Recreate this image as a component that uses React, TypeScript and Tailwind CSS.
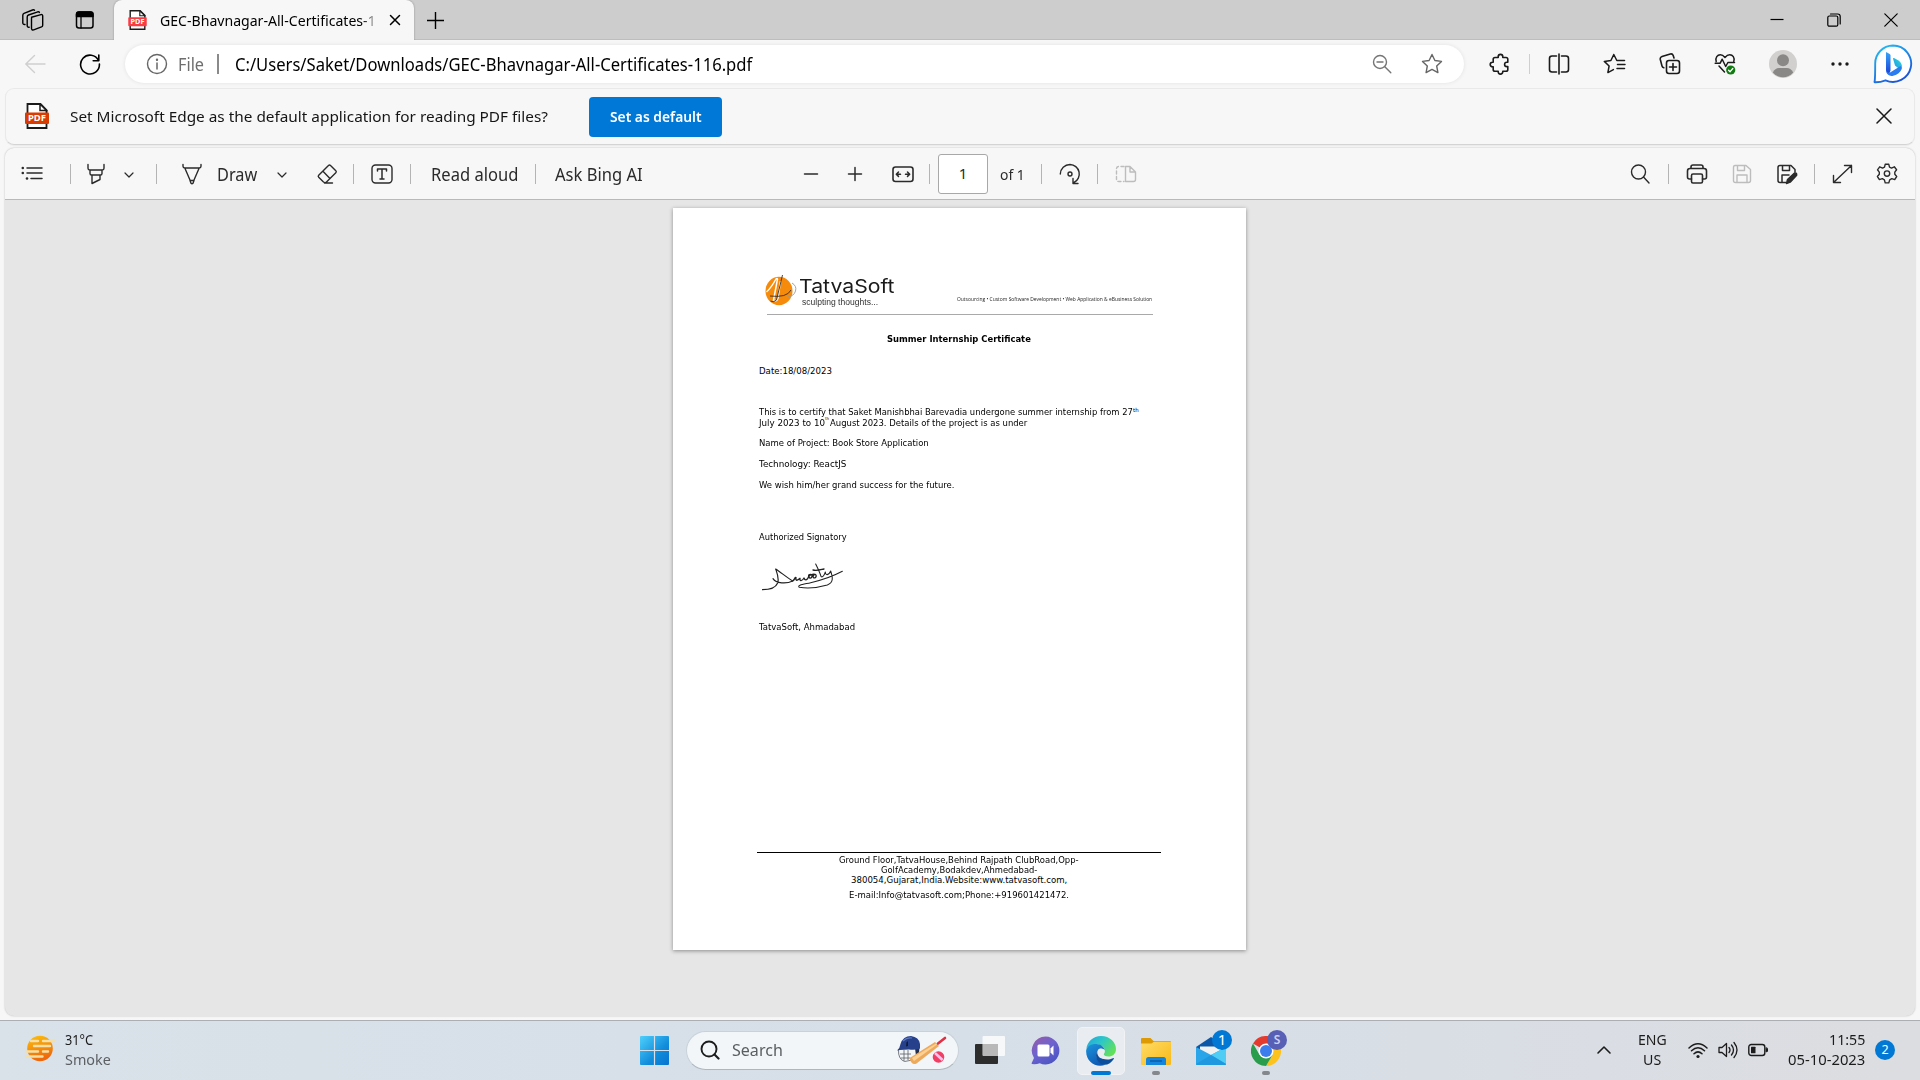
import React, { useLayoutEffect, useRef, useState } from "react";

/* Single-line text that is condensed or widened to fill the width of its box. */
function Fit({ className, children }: { className: string; children: React.ReactNode }) {
  const outer = useRef<HTMLSpanElement>(null);
  const inner = useRef<HTMLSpanElement>(null);
  const [scale, setScale] = useState(1);
  useLayoutEffect(() => {
    const o = outer.current;
    const i = inner.current;
    if (o && i && i.offsetWidth > 0) setScale(o.clientWidth / i.offsetWidth);
  }, []);
  return (
    <span ref={outer} className={`block shrink-0 whitespace-nowrap ${className}`}>
      <span ref={inner} className="inline-block origin-left" style={{ transform: `scaleX(${scale})` }}>
        {children}
      </span>
    </span>
  );
}

function Icon({
  className = "",
  box = "0 0 22 22",
  children,
}: {
  className?: string;
  box?: string;
  children: React.ReactNode;
}) {
  return (
    <svg
      className={`block shrink-0 ${className}`}
      viewBox={box}
      fill="none"
      stroke="currentColor"
      strokeWidth={1.4}
      strokeLinecap="round"
      strokeLinejoin="round"
    >
      {children}
    </svg>
  );
}

const Divider = ({ className }: { className: string }) => (
  <span className={`block h-5 w-px shrink-0 bg-[#b4b4b4] ${className}`} />
);

function PdfIcon({ className, color }: { className: string; color: string }) {
  return (
    <svg className={`block shrink-0 ${className}`} viewBox="0 0 24 26">
      <path d="M2.5 1h13l6 6v18h-19z" fill="#fff" stroke="#1b1b1b" strokeWidth="1.8" />
      <path d="M15 1v6.5h6.5z" fill="#fff" stroke="#1b1b1b" strokeWidth="1.5" />
      <rect x="0" y="9.5" width="24" height="11.5" rx="1" fill={color} />
      <text x="12" y="18.4" textAnchor="middle" fontSize="8.6" fontWeight="700" fill="#fff" fontFamily="Noto Sans, sans-serif" textLength="18" lengthAdjust="spacingAndGlyphs">
        PDF
      </text>
    </svg>
  );
}

function TabStrip() {
  return (
    <div className="flex h-10 shrink-0 items-center border-b border-[#bdbdbd] bg-[#cdcdcd] text-black">
      <Icon className="ml-[21px] h-[22px] w-[23px]" box="0 0 23 22">
        <path d="M10.5 8.2 20 5.6q1.6-.3 1.7 1.2v9.4q0 1.2-1.2 1.7l-7.800 3q-2 .5-2.200-1.400V9.600q0-1 .7-1.400z" />
        <path d="M8.200 18.200q-1.900.3-2-1.500V8q0-1.500 1.300-2l9.300-3.200q1.200-.3 1.600.6" />
        <path d="M4 15.500Q2 15.800 1.800 14V6.300q0-1.500 1.200-2L11.500 1q1.300-.5 2 .3" />
      </Icon>
      <Icon className="ml-[31px] h-5 w-5" box="0 0 20 20">
        <rect x="1.500" y="2" width="16.500" height="16" rx="2.500" strokeWidth="1.500" />
        <path d="M1.500 6.500V4.500Q1.500 2 4 2h11.500Q18 2 18 4.500v2z" fill="currentColor" />
        <path d="M6 7v11" strokeWidth="1.300" />
      </Icon>
      <div className="ml-[19px] flex h-10 w-[300px] shrink-0 items-center self-start rounded-t-lg bg-[#f7f7f7] shadow-[0_0_2px_rgba(0,0,0,0.35)] [clip-path:inset(-3px_-3px_0_-3px)]">
        <PdfIcon className="ml-[14px] h-5 w-[19px]" color="#fb3b41" />
        <div className="ml-[13px] w-[217px] shrink-0 [mask-image:linear-gradient(to_right,#000_93%,rgba(0,0,0,0.15)_100%)]">
          <Fit className="w-[216px] text-[15px] leading-5">GEC-Bhavnagar-All-Certificates-1</Fit>
        </div>
        <Icon className="ml-3 h-3 w-3" box="0 0 12 12">
          <path d="M1.500 1.500l9 9M10.500 1.500l-9 9" strokeWidth="1.500" />
        </Icon>
      </div>
      <Icon className="ml-3 h-[18px] w-[18px]" box="0 0 18 18">
        <path d="M9.500 1v17M1 9.500h17" strokeLinecap="butt" />
      </Icon>
      <div className="ml-auto flex items-center">
        <Icon className="h-[14px] w-[14px]" box="0 0 14 14">
          <path d="M.5 6.500h13" strokeWidth="1.200" strokeLinecap="butt" />
        </Icon>
        <Icon className="ml-[43px] h-[14px] w-[14px]" box="0 0 14 14">
          <rect x=".8" y="3" width="10" height="10.200" rx="1.500" strokeWidth="1.200" />
          <path d="M3.500 1h7.200q2.500 0 2.500 2.500V11" strokeWidth="1.200" />
        </Icon>
        <Icon className="ml-[43px] mr-[22px] h-[14px] w-[14px]" box="0 0 14 14">
          <path d="M.8.8l12.400 12.400M13.200.8L.8 13.200" strokeWidth="1.200" />
        </Icon>
      </div>
    </div>
  );
}

const star = "M11 1.500l2.900 6 6.600.9-4.800 4.600 1.200 6.600-5.900-3.200-5.900 3.200 1.200-6.600L1.500 8.400l6.600-.9z";

function AddressBar() {
  return (
    <div className="flex h-12 shrink-0 items-center pb-px text-[#1a1a1a]">
      <Icon className="ml-6 h-[22px] w-[22px] text-[#cfcfcf]">
        <path d="M10.500 2.500L1.800 11l8.700 8.500M2 11h19" />
      </Icon>
      <Icon className="ml-[33px] h-[22px] w-[22px] text-black">
        <path d="M19.500 7.500A9.400 9.400 0 1 0 20.400 11M19.800 2v5.700h-5.600" strokeWidth="1.600" />
      </Icon>
      <div className="ml-6 flex h-[38px] w-[1339px] shrink-0 items-center rounded-full bg-white shadow-[0_0_4px_rgba(0,0,0,0.09)]">
        <Icon className="ml-[21px] h-[22px] w-[22px] text-[#666]">
          <circle cx="11" cy="11" r="9.500" />
          <path d="M11 10v6" strokeWidth="1.500" />
          <circle cx="11" cy="6.800" r=".5" fill="currentColor" />
        </Icon>
        <Fit className="ml-[10px] w-[26px] text-[17.500px] leading-6 text-[#6e6e6e]">File</Fit>
        <span className="ml-[13px] block h-5 w-[1.500px] bg-[#8a8a8a]" />
        <Fit className="ml-4 w-[517px] text-[17.500px] leading-6 text-black">C:/Users/Saket/Downloads/GEC-Bhavnagar-All-Certificates-116.pdf</Fit>
        <Icon className="ml-auto h-5 w-5 text-[#757575]" box="0 0 20 20">
          <circle cx="8" cy="8" r="6.500" />
          <path d="M12.800 12.800l6 6M5 8h6" />
        </Icon>
        <Icon className="ml-[29px] mr-[21px] h-[22px] w-[22px] text-[#666]">
          <path d={star} />
        </Icon>
      </div>
      <Icon className="ml-[25px] h-[22px] w-[22px]">
        <path
          d="M6 4.500h3.200V3.700a2.300 2.300 0 0 1 4.600 0v.8H17q1.800 0 1.800 1.800v2.900h-1a2.200 2.200 0 0 0 0 4.400h1v2.900q0 1.800-1.800 1.800h-3.200v.5a2.300 2.300 0 0 1-4.600 0v-.5H6q-1.800 0-1.800-1.800v-2.700h-.7a2.300 2.300 0 0 1 0-4.600h.7V6.300Q4.200 4.500 6 4.500z"
          strokeWidth="1.600"
        />
      </Icon>
      <Divider className="ml-[18px] bg-[#cfcfcf]" />
      <Icon className="ml-[18px] h-[22px] w-[22px]">
        <path d="M8.500 3H4Q1.500 3 1.500 5.500v11Q1.500 19 4 19h4.500M13.500 3H18q2.500 0 2.500 2.500v11Q20.500 19 18 19h-4.500M11 1v20" strokeWidth="1.600" />
      </Icon>
      <Icon className="ml-[33px] h-[22px] w-[23px]" box="0 0 23 22">
        <path d="M14.200 7.500h-.4L10.800 1.500 7.900 7.500 1.300 8.400l4.800 4.600-1.200 6.600 5.500-3M14 7.500h7.500M14.500 11.500H22M14 15.500h7.500" strokeWidth="1.500" />
      </Icon>
      <Icon className="ml-[33px] h-[22px] w-[22px]">
        <rect x="7.500" y="7.500" width="13" height="13" rx="2.500" strokeWidth="1.600" />
        <path d="M14 10.500v7M10.500 14h7M4.800 14.800Q3.400 14.500 3 13L1.300 6.500Q.8 4.300 3 3.500L11.300 1q2.200-.5 2.900 1.500l.8 2.500" strokeWidth="1.600" />
      </Icon>
      <Icon className="ml-[33px] h-6 w-6" box="0 0 24 24">
        <path d="M2.200 9.500C1 5.500 3.500 2.800 6.300 2.800c2 0 3.300 1 4.700 2.600 1.400-1.600 2.700-2.600 4.700-2.600 3 0 5.300 2.700 4.100 6.700M1.200 11.200h5l2-4 3.500 7.300 2.200-4h6.600M5 14l5.500 6" strokeWidth="1.500" />
        <circle cx="16.700" cy="18" r="4.600" fill="#107c10" stroke="none" />
        <path d="M14.600 18.200l1.500 1.500 2.700-3.200" stroke="#fff" strokeWidth="1.300" />
      </Icon>
      <svg className="ml-[31px] block h-7 w-7 shrink-0" viewBox="0 0 28 28">
        <circle cx="14" cy="14" r="14" fill="#d2d0ce" />
        <circle cx="14" cy="10.300" r="6" fill="#8a8886" />
        <path d="M3.800 22.500Q6 18 10 18h8q4 0 6.200 4.500A13.500 13.500 0 0 1 3.800 22.500z" fill="#8a8886" />
      </svg>
      <Icon className="ml-[33px] h-5 w-5" box="0 0 20 20">
        <g fill="currentColor" stroke="none">
          <circle cx="3" cy="10" r="1.700" />
          <circle cx="10" cy="10" r="1.700" />
          <circle cx="17" cy="10" r="1.700" />
        </g>
      </Icon>
      <svg className="ml-[23px] block h-10 w-[40px] shrink-0" viewBox="0 0 40 40">
        <defs>
          <linearGradient id="bubble" x1="0" y1="0" x2=".6" y2="1">
            <stop offset="0" stopColor="#25c3f5" />
            <stop offset="1" stopColor="#1b55d8" />
          </linearGradient>
          <linearGradient id="bstem" x1="0" y1="0" x2="0" y2="1">
            <stop offset="0" stopColor="#35a5f8" />
            <stop offset="1" stopColor="#1b3fd6" />
          </linearGradient>
          <linearGradient id="bbowl" x1="1" y1="0" x2="0" y2="1">
            <stop offset="0" stopColor="#2fe0d0" />
            <stop offset="1" stopColor="#1d8df0" />
          </linearGradient>
        </defs>
        <path d="M20 1.500a18.200 18.200 0 1 1-7.500 34.800Q7 38.500 2 38.300q-.8-.2-.3-1Q2.200 33 2.200 20A18 18 0 0 1 20 1.500z" fill="#fff" stroke="url(#bubble)" strokeWidth="1.900" />
        <path d="M20 14.500q0-.8 1-.5l4.500 2.500q4 2.500 3.300 7.500l-1.300 2-5.500-4.500z" fill="url(#bbowl)" />
        <path d="M13 8l3.700 2q.8.500.8 1.500v14.700l-1.500 4Q13 29 13 26z" fill="url(#bstem)" />
        <path d="M13.200 27.500q1.500 5.300 7 4.200 6.500-1.500 8.500-6.700.3-1.700-1.200-3l-10 6.200q-2.500 1.200-4.300-.7z" fill="#2a7cf0" />
      </svg>
    </div>
  );
}

function DefaultAppBar() {
  return (
    <div className="mx-[5px] flex h-[57px] shrink-0 items-center rounded-[9px] border border-[#e9e9e9] border-b-[#d4d4d4] bg-[#f7f7f7] pb-px shadow-[0_1px_1px_rgba(0,0,0,0.05)]">
      <PdfIcon className="ml-[19px] h-[26px] w-6" color="#da3b01" />
      <Fit className="ml-[21px] w-[478px] text-[15px] leading-5 text-[#151515]">
        Set Microsoft Edge as the default application for reading PDF files?
      </Fit>
      <button className="ml-[41px] mt-px flex h-10 w-[133px] shrink-0 items-center justify-center rounded-sm bg-[#0078d7] pb-px text-white">
        <Fit className="w-[92px] text-left text-[15px] font-semibold leading-5">Set as default</Fit>
      </button>
      <Icon className="ml-auto mr-[22px] h-4 w-4 text-[#1a1a1a]" box="0 0 16 16">
        <path d="M1 1l14 14M15 1L1 15" strokeWidth="1.500" />
      </Icon>
    </div>
  );
}

const Chevron = ({ className }: { className: string }) => (
  <Icon className={`h-[10px] w-[10px] ${className}`} box="0 0 10 10">
    <path d="M1 4l4 4 4-4" strokeWidth="1.200" />
  </Icon>
);

function PdfToolbar() {
  return (
    <div className="flex h-[52px] shrink-0 items-center rounded-t-[9px] border-b border-[#b9b9b9] bg-[#f7f7f7] text-[17.500px] text-[#2b2b2b]">
      <Icon className="ml-4 h-[22px] w-[22px]">
        <path d="M6 5h15M6 10h15M10 15.500h11" strokeWidth="1.500" />
        <g fill="currentColor" stroke="none">
          <circle cx="1.800" cy="5" r="1.300" />
          <circle cx="1.800" cy="10" r="1.300" />
          <circle cx="6" cy="15.500" r="1.300" />
        </g>
      </Icon>
      <Divider className="ml-[27px]" />
      <Icon className="ml-[15px] h-[22px] w-[20px]" box="0 0 20 22">
        <path d="M2 1.500v3.800q0 1.700 1.700 1.700h12.600Q18 7 18 5.300V1.500M4 7v3.500q0 1.500 1.500 1.500h9q1.500 0 1.500-1.500V7M6 12.500V20.500l8-4v-4" />
      </Icon>
      <Chevron className="ml-[18px]" />
      <Divider className="ml-[22px]" />
      <Icon className="ml-[25px] h-[22px] w-5" box="0 0 20 22">
        <path d="M1 1.500v1.800Q1 5 2.800 5h14.400Q19 5 19 3.300V1.500M2.800 5l5.400 12.500M17.200 5l-5.400 12.500M8 17.500L9 20.200q1 .9 2 0l1-2.700z" />
      </Icon>
      <Fit className="ml-[15px] w-10 leading-6">Draw</Fit>
      <Chevron className="ml-5" />
      <Icon className="ml-[29px] h-[22px] w-[22px]">
        <path d="M12.500 2.500q1-1 2 0l5.300 5.300q1 1 0 2L10.500 19q-1.500 1.200-3 0l-4.800-4.700q-1-1 0-2zM7.200 8.500l6.500 6.700M8.500 20h8" />
      </Icon>
      <Divider className="ml-[15px]" />
      <Icon className="ml-[17px] h-[22px] w-[22px]">
        <rect x="1" y="2" width="20" height="18" rx="3.500" />
        <path d="M6.500 8V6h9v2M11 6v10M9 16h4" strokeWidth="1.500" />
      </Icon>
      <Divider className="ml-[17px]" />
      <Fit className="ml-5 w-[87px] leading-6">Read aloud</Fit>
      <Divider className="ml-[17px]" />
      <Fit className="ml-[19px] w-[88px] leading-6">Ask Bing AI</Fit>

      <Icon className="ml-[160px] h-4 w-4" box="0 0 16 16">
        <path d="M1.500 8h13" strokeWidth="1.500" />
      </Icon>
      <Icon className="ml-7 h-4 w-4" box="0 0 16 16">
        <path d="M1.500 8h13M8 1.500v13" strokeWidth="1.500" />
      </Icon>
      <Icon className="ml-[29px] h-[22px] w-[22px]">
        <rect x="1" y="4" width="20" height="14.500" rx="2.500" strokeWidth="1.600" />
        <path d="M4.500 11.200h4M6.500 9L4.300 11.200l2.200 2.200M17.500 11.200h-4M15.500 9l2.200 2.200-2.200 2.200" strokeWidth="1.500" />
      </Icon>
      <Divider className="ml-[15px]" />
      <div className="ml-2 flex h-10 w-[50px] shrink-0 items-center justify-center rounded-[3px] border border-[#a8a8a8] bg-white text-[15px]">1</div>
      <Fit className="ml-3 w-[25px] text-[15px] leading-6">of 1</Fit>
      <Divider className="ml-4" />
      <Icon className="ml-[17px] h-[22px] w-[22px]">
        <path d="M1.300 11A9.700 9.700 0 0 1 11 1.500a9.500 9.500 0 0 1 4 18M19 20.500h-5v-5" />
        <circle cx="11" cy="11" r="2" />
      </Icon>
      <Divider className="ml-[16px]" />
      <Icon className="ml-[17px] h-[22px] w-[22px] text-[#bdbdbd]">
        <path d="M10.500 3.500v15h8q2 0 2-2V9L15 3.500zM15 3.500V9h5.500" />
        <path d="M9 3.500H4q-2.500 0-2.500 2.500v10.500q0 2 2.500 2h5" strokeDasharray="3 2.500" />
      </Icon>

      <Icon className="ml-auto h-5 w-5" box="0 0 20 20">
        <circle cx="8.500" cy="8" r="7" />
        <path d="M13.500 13l5.500 6" />
      </Icon>
      <Divider className="ml-[18px]" />
      <Icon className="ml-[17px] h-[22px] w-[22px]">
        <path d="M5 5.500V4q0-2 2-2h8q2 0 2 2v1.500M5.500 16H3.500q-2 0-2-2V8q0-2.500 2.500-2.500h14Q20.500 5.500 20.500 8v6q0 2-2 2h-2" strokeWidth="1.600" />
        <rect x="5.500" y="11" width="11" height="9" rx="1.500" strokeWidth="1.600" />
      </Icon>
      <Icon className="ml-[23px] h-[22px] w-[22px] text-[#bdbdbd]">
        <path d="M4 2.500h11l4.500 4v11q0 2-2 2h-13q-2 0-2-2V4.500q0-2 1.500-2zM6.500 2.500v5h7v-5M6 19.500v-7.500h10v7.500" />
      </Icon>
      <Icon className="ml-[23px] h-[22px] w-[22px]">
        <path d="M10 19.500H4q-2 0-2-2V4.500q0-2 2-2h11l4 4V9M6.500 2.500v5h7v-5M6 19.500V12h7" strokeWidth="1.500" />
        <path d="M10.500 20.500l1-4 7-6.500q2.500-.5 2.200 2.200l-6.500 7z" fill="currentColor" />
      </Icon>
      <Divider className="ml-4" />
      <Icon className="ml-4 h-[22px] w-[22px]">
        <path d="M13.500 2.500h7v7M20.500 2.500l-18 17M2.500 12.500v7h7" />
      </Icon>
      <Icon className="ml-[23px] mr-[17px] h-[22px] w-[22px]">
        <path d="M9.200 1.300h3.600l.7 2.900 2 .9 2.800-1.300 2.300 3-1.800 2.300v2.200l1.900 2.200-2 3.100-2.900-.9-2.100 1.200-.9 3H9.200l-.8-3-2.100-1.200-2.900.9-2-3.100 1.900-2.200V9.100L1.500 6.800l2.200-3 2.900 1.300 1.900-.9z" />
        <circle cx="11" cy="10.600" r="2.700" />
      </Icon>
    </div>
  );
}

function Certificate() {
  return (
    <div className="flex h-[742px] w-[573px] shrink-0 flex-col bg-white pl-[86px] font-['DejaVu_Sans',sans-serif] text-[8.600px] text-black shadow-[0_1px_4px_rgba(0,0,0,0.4)]">
      <div className="mt-[66px] flex h-9 shrink-0">
        <svg className="ml-[6px] block h-9 w-[34px] shrink-0" viewBox="0 0 34 36">
          <ellipse cx="14" cy="17" rx="13.500" ry="14.200" fill="#f58a0b" />
          <path d="M1.500 18Q6 14 11 5q1-1 1.500.2L8.500 26Q12 28 13 24l2.500-17" fill="none" stroke="#fff" strokeWidth="1.500" />
          <path d="M17.500 1L11.500 26Q8 29 5.500 27M5 22Q22 24 26 16" fill="none" stroke="#3c2d20" strokeWidth=".9" />
          <path d="M27 9q5 3 3.500 8T23 23" fill="none" stroke="#9a9a9a" strokeWidth=".9" />
        </svg>
        <div className="mt-[3px] w-[99px]">
          <Fit className="h-[21px] w-[96px] font-['Inter',sans-serif] text-[19px] leading-[20px] text-[#1b1b1b]">TatvaSoft</Fit>
          <Fit className="ml-[3px] h-[10px] w-[76px] font-['Liberation_Sans',sans-serif] text-[9px] leading-[9px] text-[#333]">sculpting thoughts...</Fit>
        </div>
        <Fit className="ml-[59px] mt-[20px] w-[195px] font-['Open_Sans',sans-serif] text-[5.500px] leading-[10px] text-[#222]">
          Outsourcing • Custom Software Development • Web Application &amp; eBusiness Solution
        </Fit>
      </div>
      <div className="ml-2 mt-1 h-px w-[386px] shrink-0 bg-[#a9a9a9]" />
      <Fit className="ml-[128px] mt-[18px] h-3 w-[144px] font-bold leading-3">Summer Internship Certificate</Fit>
      <Fit className="mt-5 h-3 w-[73px] leading-3">Date:18/08/2023</Fit>
      <div className="mt-[30px] flex h-[11px] shrink-0">
        <Fit className="w-[374px] leading-[11px]">This is to certify that Saket Manishbhai Barevadia undergone summer internship from 27</Fit>
        <Fit className="-mt-[2px] w-[6px] text-[5.500px] leading-[10px]">th</Fit>
      </div>
      <div className="flex h-[11px] shrink-0">
        <Fit className="w-[66px] leading-[11px]">July 2023 to 10</Fit>
        <Fit className="-mt-[3px] w-[4px] text-[4px] leading-[8px]">th</Fit>
        <Fit className="ml-[1px] w-[197px] leading-[11px]">August 2023. Details of the project is as under</Fit>
      </div>
      <Fit className="mt-2 h-3 w-[170px] leading-3">Name of Project: Book Store Application</Fit>
      <Fit className="mt-[9px] h-3 w-[87px] leading-3">Technology: ReactJS</Fit>
      <Fit className="mt-[9px] h-3 w-[195px] leading-3">We wish him/her grand success for the future.</Fit>
      <Fit className="mt-10 h-3 w-[88px] leading-3">Authorized Signatory</Fit>
      <svg className="ml-[3px] mt-[19px] block h-[30px] w-[82px] shrink-0" viewBox="66 425 246 90" fill="none" stroke="#222" strokeLinecap="round" strokeLinejoin="round">
        <path d="M67 508C90 508 108 500 113 488C118 474 112 460 107 446C122 456 142 472 158 482C140 491 108 490 99 475" strokeWidth="3.600" />
        <path d="M158 482C166 476 164 470 168 472C166 482 172 482 180 474C178 483 186 483 192 473C194 480 202 482 206 468C204 460 218 460 216 468C214 476 204 474 208 466C222 456 234 464 226 472C216 476 218 462 226 462" strokeWidth="4" />
        <path d="M227 431C234 445 240 458 243 468C248 474 254 462 256 455C256 466 266 466 272 452C278 470 282 486 262 494C235 502 200 504 178 501C170 494 190 492 212 487C245 480 275 470 307 453" strokeWidth="3.200" />
        <path d="M219 449C232 452 242 448 252 446" strokeWidth="4" />
      </svg>
      <Fit className="mt-[29px] h-3 w-[96px] leading-3">TatvaSoft, Ahmadabad</Fit>
      <div className="-ml-[2px] mt-[219px] h-px w-[404px] shrink-0 bg-black" />
      <Fit className="ml-[80px] mt-[2px] h-[10px] w-[240px] leading-[10px]">Ground Floor,TatvaHouse,Behind Rajpath ClubRoad,Opp-</Fit>
      <Fit className="ml-[122px] h-[10px] w-[156px] leading-[10px]">GolfAcademy,Bodakdev,Ahmedabad-</Fit>
      <Fit className="ml-[92px] h-[10px] w-[216px] leading-[10px]">380054,Gujarat,India.Website:www.tatvasoft.com,</Fit>
      <Fit className="ml-[90px] mt-[5px] h-[10px] w-[220px] leading-[10px]">E-mail:Info@tatvasoft.com;Phone:+919601421472.</Fit>
    </div>
  );
}

function Taskbar() {
  return (
    <div className="flex h-[60px] shrink-0 items-center border-t border-[#abafb3] bg-linear-to-r from-[#d9e1e9] via-[#d6dfe8] to-[#dcdde1] text-[#1c1c1c]">
      <svg className="-mt-[3px] ml-[25px] block h-[30px] w-[30px] shrink-0" viewBox="0 0 30 30">
        <defs>
          <linearGradient id="sun" x1="0" y1="0" x2=".3" y2="1">
            <stop offset="0" stopColor="#fcc20c" />
            <stop offset="1" stopColor="#ee680c" />
          </linearGradient>
        </defs>
        <circle cx="15" cy="14.500" r="12.800" fill="url(#sun)" />
        <g stroke="#f3dfa8" strokeWidth="2.400" strokeLinecap="round">
          <path d="M6 7h7M18 7h11M9 12h16M1 17.500h12M18 17.500h5M1.500 22.500h16" />
        </g>
      </svg>
      <div className="mb-[4px] ml-[10px] w-[50px]">
        <Fit className="w-7 text-[15px] leading-5">31°C</Fit>
        <Fit className="w-[46px] text-[15px] leading-5 text-[#5c5f63]">Smoke</Fit>
      </div>

      <svg className="ml-[525px] block h-[29px] w-[29px] shrink-0" viewBox="0 0 29 29">
        <defs>
          <linearGradient id="win" x1="0" y1="0" x2="1" y2="1">
            <stop offset="0" stopColor="#4fd0fb" />
            <stop offset=".6" stopColor="#118ddb" />
            <stop offset="1" stopColor="#0673d0" />
          </linearGradient>
        </defs>
        <path d="M0 1q0-1 1-1h12.900v13.900H0zM15.100 0H28q1 0 1 1v12.900H15.100zM0 15.100h13.900V29H1q-1 0-1-1zM15.100 15.100H29V28q0 1-1 1H15.100z" fill="url(#win)" />
      </svg>
      <div className="-mt-px ml-[17px] mr-px flex h-[39px] w-[273px] shrink-0 items-center rounded-full border border-[#c9d1d9] border-b-[#aeb6be] bg-[#f2f6f9]">
        <Icon className="ml-[13px] h-5 w-5" box="0 0 20 20">
          <circle cx="9" cy="9" r="7.500" strokeWidth="1.900" />
          <path d="M14.500 14.500L18.500 18.500" strokeWidth="2.200" />
        </Icon>
        <Fit className="ml-[12px] w-[51px] text-[17px] leading-6 text-[#5b5e61]">Search</Fit>
        <svg className="ml-auto mr-[11px] block h-[30px] w-[50px] shrink-0" viewBox="0 0 50 30">
          <g fill="none" stroke="#5a5e66" strokeWidth=".8">
            <path d="M1.500 15q-.5 9 6 11.500l8-1.500M3 19h11M3.500 23h10M7 15v11M11 15v10" />
          </g>
          <path d="M18 13l1 8 3-3 .5-6z" fill="#22304f" />
          <path d="M0 15.500Q3 13 3.500 9 6 1 14 1q8 1 9 8v4.500Q18 15.500 12 14.500L3 15z" fill="#27408b" />
          <path d="M6 6q4-4 9-3" stroke="#6079bd" strokeWidth="1.200" fill="none" />
          <path d="M9.500 7.500l1.500-1.500v5l-2 .5z" fill="#111a36" />
          <path d="M13.500 22.500L38 7l4 4-22.500 17.500q-3 1.500-5-1-2.500-3-1-5z" fill="#eeaa5c" />
          <path d="M15 23L39 8.500l1 1L17 26z" fill="#fcd193" />
          <path d="M41 8.500l7-5.500" stroke="#dd3146" strokeWidth="2.600" strokeLinecap="round" />
          <circle cx="41.500" cy="22" r="5.800" fill="#f03f62" />
          <path d="M38 18l7.500 7" stroke="#f7c4ef" strokeWidth="2.600" />
        </svg>
      </div>
      <svg className="-mt-px ml-[15px] mr-px block h-7 w-[30px] shrink-0" viewBox="0 0 30 28">
        <rect x="0" y="8" width="23" height="20" rx="1" fill="#2d2d2d" />
        <rect x="7.500" y="0" width="22.500" height="20" rx="1" fill="#fff" fillOpacity=".78" />
        <path d="M8 8h15v12H8z" fill="#b9b9b9" />
      </svg>
      <svg className="ml-[25px] block h-[29px] w-[29px] shrink-0" viewBox="0 0 29 29">
        <defs>
          <linearGradient id="chat" x1="0" y1="0" x2=".7" y2="1">
            <stop offset="0" stopColor="#9b5ba5" />
            <stop offset=".5" stopColor="#6d63cf" />
            <stop offset="1" stopColor="#4c54c4" />
          </linearGradient>
        </defs>
        <path d="M14.500.5a14 14 0 1 1-5.800 26.800Q5 28.500 1 28q-.8-.5-.2-1.300L3 22A14 14 0 0 1 14.500.5z" fill="url(#chat)" />
        <rect x="6.500" y="8.500" width="12" height="12" rx="1.500" fill="#fff" />
        <path d="M19.500 12.500l3-3v10l-3-3z" fill="#fff" />
      </svg>
      <div className="ml-[17px] flex h-12 w-12 shrink-0 flex-col items-center rounded-[5px] border border-[#f0f2f4] bg-[#e9edf1]">
        <svg className="mt-2 block h-[30px] w-[30px] shrink-0" viewBox="0 0 30 30">
          <defs>
            <linearGradient id="edgeTop" x1="0" y1="0" x2="1" y2=".6">
              <stop offset="0" stopColor="#1fa3e0" />
              <stop offset=".5" stopColor="#2ec7c6" />
              <stop offset="1" stopColor="#62e05a" />
            </linearGradient>
            <linearGradient id="edgeSide" x1="0" y1="0" x2=".5" y2="1">
              <stop offset="0" stopColor="#1c95dc" />
              <stop offset="1" stopColor="#0d5bb5" />
            </linearGradient>
          </defs>
          <path d="M.3 13.500C1 5.500 7.300 0 15 0c9 0 15 6.500 15 13 0 5-3.800 7.500-7.500 7.500-3.300 0-4.700-1.200-4.700-2.200 0-.8 1-1.200 1-3.300C18.800 11 15 8.500 10.500 8.500 5 8.500 1.500 11 .3 13.500z" fill="url(#edgeTop)" />
          <path d="M.2 14C1.500 9.500 6 7.500 10.500 8c4 .3 7.500 2.500 8.200 6C15 10.500 9 15 10.500 21c1 4.500 5 7.500 9 7.700C10 32.500-.8 25.500.2 14z" fill="url(#edgeSide)" />
          <path d="M11.700 14.500C8.500 18 10 25.500 15.500 28.300c5 1.700 9.500-1 12.300-5.300.3-.8-.3-1.200-1-.8-4.300 2.200-10.800 1.500-13.300-2-1.300-1.800-1.800-3.700-1.800-5.700z" fill="#0c4f9c" />
          <path d="M12 14c-1.500 2-.7 5 1 7 1.500 1.500 4 2 5.800 1.500-1.300-.6-2-2-1.800-3.500.1-1 1.500-1.500 1.500-3.500C18 12.500 14 11.500 12 14z" fill="#e9edf1" />
        </svg>
        <span className="mt-[5px] block h-1 w-5 shrink-0 rounded-full bg-[#0078d4]" />
      </div>
      <div className="ml-4 flex h-12 w-[30px] shrink-0 flex-col items-center">
        <svg className="mt-[11px] block h-[27px] w-[30px] shrink-0" viewBox="0 0 30 27">
          <defs>
            <linearGradient id="folder" x1="0" y1="0" x2="1" y2="1">
              <stop offset="0" stopColor="#ffdc67" />
              <stop offset="1" stopColor="#f8b917" />
            </linearGradient>
          </defs>
          <path d="M0 1q0-1 1-1h8.500l3 3H29q1 0 1 1v5H0z" fill="#dd9a05" />
          <path d="M0 5.500h10.500l2.500-1.700h17V26q0 1-1 1H1q-1 0-1-1z" fill="url(#folder)" />
          <path d="M5 27v-5.500q0-2.500 2.500-2.500h15q2.500 0 2.500 2.500V27z" fill="#1485dc" />
          <path d="M9 23h12" stroke="#0b4f98" strokeWidth="1.200" />
        </svg>
        <span className="mt-[6px] block h-1 w-2 shrink-0 rounded-full bg-[#84878b]" />
      </div>
      <div className="relative ml-[25px] flex h-12 w-[30px] shrink-0 flex-col items-center">
        <svg className="mt-[10px] block h-7 w-[30px] shrink-0" viewBox="0 0 30 28">
          <path d="M0 10L15 0l15 10v9H0z" fill="#0c58a8" />
          <path d="M4 9.500h22v8L15 22 4 16z" fill="#f1f1f1" />
          <path d="M0 10l15 8 15-8v17q0 1-1 1H1q-1 0-1-1z" fill="#2aa5ea" />
          <path d="M15 18l15-8v17z" fill="#4fcdf5" />
          <path d="M0 27l15-9 15 9q0 1-1 1H1q-1 0-1-1z" fill="#1f98e0" />
        </svg>
        <span className="absolute left-[16px] top-[3px] flex h-5 w-5 items-center justify-center rounded-full bg-[#0078d4] text-[15px] leading-none text-white">1</span>
      </div>
      <div className="relative ml-[25px] flex h-12 w-[30px] shrink-0 flex-col items-center">
        <svg className="mt-[9px] block h-[30px] w-[30px] shrink-0" viewBox="0 0 30 30">
          <path d="M15 15L2 7.500A15 15 0 0 1 28 7.500z" fill="#e33b2e" />
          <path d="M15 15V7.500h13A15 15 0 0 1 15 30l6.500-11.200z" fill="#fcc31e" />
          <path d="M15 15l6.500 3.800L15 30A15 15 0 0 1 2 7.500l6.500 11.300z" fill="#2a9d4c" />
          <circle cx="15" cy="15" r="7.500" fill="#fff" />
          <circle cx="15" cy="15" r="6" fill="#3b7ded" />
        </svg>
        <span className="mt-[5px] block h-1 w-2 shrink-0 rounded-full bg-[#84878b]" />
        <span className="absolute left-[16px] top-[3px] flex h-5 w-5 items-center justify-center rounded-full bg-[#5860b5] text-[12px] font-semibold leading-none text-[#cfd2f2]">S</span>
      </div>

      <Icon className="-mt-px ml-auto h-[10px] w-4" box="0 0 16 10">
        <path d="M2 8l6-6 6 6" strokeWidth="1.600" />
      </Icon>
      <div className="mb-[3px] ml-[24px] flex w-[32px] shrink-0 flex-col items-center">
        <Fit className="w-[29px] text-[15px] leading-5">ENG</Fit>
        <Fit className="w-[18px] text-[15px] leading-5">US</Fit>
      </div>
      <Icon className="-mt-px ml-5 h-[17px] w-5" box="0 0 20 17">
        <path d="M1 6Q10-2.500 19 6M3.500 8.800q6.500-6 13 0M6 11.700q4-3.600 8 0" strokeWidth="1.500" />
        <circle cx="10" cy="14.500" r="1.600" fill="currentColor" stroke="none" />
      </Icon>
      <Icon className="-mt-px ml-[10px] h-[18px] w-5" box="0 0 20 18">
        <path d="M1 6.500h3L8.500 2.500v13L4 11.500H1zM11 6.500q2 2.500 0 5M13.500 4q4 5 0 10M16 1.500q6 7.500 0 15" strokeWidth="1.300" />
      </Icon>
      <Icon className="-mt-px ml-[10px] h-[14px] w-5" box="0 0 20 14">
        <rect x=".8" y="1.500" width="16" height="11" rx="2.500" strokeWidth="1.400" />
        <rect x="3" y="3.800" width="4.500" height="6.500" rx=".5" fill="currentColor" stroke="none" />
        <path d="M18 5v4l2-1V6z" fill="currentColor" strokeWidth=".8" />
      </Icon>
      <div className="mb-[4px] ml-5 flex w-[77px] shrink-0 flex-col items-end">
        <Fit className="w-[36px] text-[15px] leading-5">11:55</Fit>
        <Fit className="w-[77px] text-[15px] leading-5">05-10-2023</Fit>
      </div>
      <span className="-mt-px ml-[10px] mr-[25px] flex h-5 w-5 shrink-0 items-center justify-center rounded-full bg-[#0078d4] text-[12.500px] leading-none text-white">2</span>
    </div>
  );
}

export default function App() {
  return (
    <div className="flex h-[1080px] w-[1920px] flex-col overflow-hidden bg-[#f7f7f7] font-['Noto_Sans',sans-serif]">
      <TabStrip />
      <AddressBar />
      <DefaultAppBar />
      <div className="mx-[5px] mb-1 mt-[3px] flex min-h-0 flex-1 flex-col overflow-hidden rounded-[9px] bg-[#e6e6e6] shadow-[0_0_2px_rgba(0,0,0,0.25)]">
        <PdfToolbar />
        <main className="flex flex-1 justify-center pr-[1px] pt-2">
          <Certificate />
        </main>
      </div>
      <Taskbar />
    </div>
  );
}
